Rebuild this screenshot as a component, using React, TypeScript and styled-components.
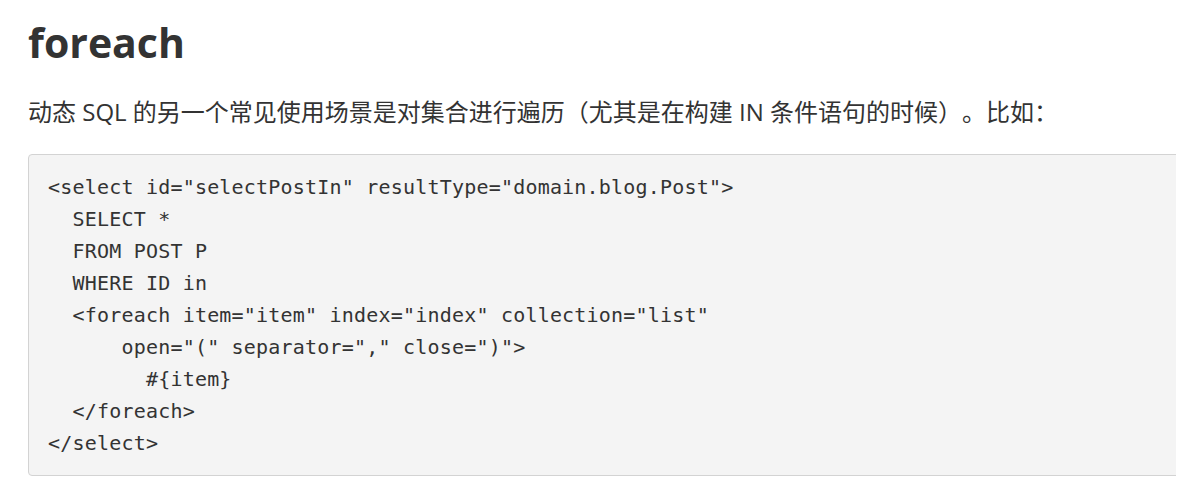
import React from "react";
import styled, { createGlobalStyle } from "styled-components";

const Global = createGlobalStyle`
  html, body { margin: 0; padding: 0; background: #fff; }
  body { font-family: "Open Sans", "Noto Sans CJK SC", sans-serif; color: #333; }
`;

const Page = styled.div`
  width: 1176px;
  overflow: hidden;
  padding: 0 0 0 28px;
  box-sizing: border-box;
`;

const Title = styled.h2`
  margin: 12px 0 0 0;
  font-family: "Open Sans", "Noto Sans CJK SC", sans-serif;
  font-weight: 700;
  font-size: 41px;
  line-height: 60px;
  color: #333;
`;

const Para = styled.p`
  margin: 22px 0 0 0;
  font-family: "Open Sans", "Noto Sans CJK SC", sans-serif;
  font-size: 24px;
  line-height: 36px;
  color: #333;
  white-space: nowrap;
  text-spacing-trim: space-all;
`;

const CodeBox = styled.pre`
  margin: 24px 0 0 0;
  width: 1200px;
  box-sizing: border-box;
  background: #f4f4f4;
  border: 1px solid #d3d3d3;
  border-radius: 4px;
  padding: 16px 19px;
  font-family: "DejaVu Sans Mono", monospace;
  font-size: 20px;
  letter-spacing: 0.2px;
  line-height: 32px;
  color: #333;
`;

const code = `<select id="selectPostIn" resultType="domain.blog.Post">
  SELECT *
  FROM POST P
  WHERE ID in
  <foreach item="item" index="index" collection="list"
      open="(" separator="," close=")">
        #{item}
  </foreach>
</select>`;

export default function App() {
  return (
    <>
      <Global />
      <Page>
        <Title>foreach</Title>
        <Para>动态 SQL 的另一个常见使用场景是对集合进行遍历（尤其是在构建 IN 条件语句的时候）。比如：</Para>
        <CodeBox>{code}</CodeBox>
      </Page>
    </>
  );
}
